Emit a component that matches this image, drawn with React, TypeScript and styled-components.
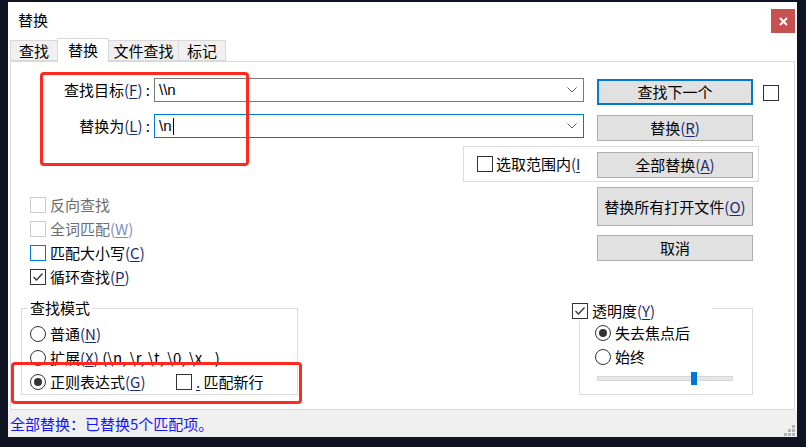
import React from "react";
import styled, { createGlobalStyle } from "styled-components";

const GlobalStyle = createGlobalStyle`
  html, body {
    margin: 0;
    padding: 0;
    background: #0f1322;
  }
  body {
    font-family: "Noto Sans CJK SC", "Noto Sans", sans-serif;
    font-size: 15px;
    line-height: 20px;
    color: #000;
  }
  * {
    box-sizing: border-box;
  }
`;

const Desktop = styled.div`
  width: 806px;
  height: 447px;
  padding: 2px 0 0 8px;
  background: #0f1322;
  overflow: hidden;
`;

const Dialog = styled.div`
  width: 789px;
  height: 435px;
  background: #fff;
  display: flex;
  flex-direction: column;
`;

const TitleBar = styled.div`
  height: 36px;
  flex: none;
  display: flex;
  align-items: center;
  justify-content: space-between;
  padding: 0 2px 0 10px;
`;

const CloseButton = styled.div`
  width: 24px;
  height: 24px;
  margin-top: 2px;
  background: #c75050;
  display: flex;
  align-items: center;
  justify-content: center;
`;

const TabStrip = styled.div`
  height: 23px;
  flex: none;
  display: flex;
  align-items: flex-end;
  padding-left: 2px;
`;

const Tab = styled.div<{ $active?: boolean; $w: number }>`
  position: relative;
  width: ${(p) => p.$w}px;
  height: ${(p) => (p.$active ? 24 : 21)}px;
  margin-right: -1px;
  margin-bottom: ${(p) => (p.$active ? -1 : 0)}px;
  z-index: ${(p) => (p.$active ? 2 : 1)};
  border: 1px solid #d9d9d9;
  border-bottom: ${(p) => (p.$active ? "none" : "1px solid #d9d9d9")};
  background: ${(p) => (p.$active ? "#fff" : "#f0f0f0")};
  display: flex;
  justify-content: center;
  align-items: ${(p) => (p.$active ? "flex-start" : "center")};
  padding-top: ${(p) => (p.$active ? 1 : 0)}px;
  line-height: 20px;
`;

const Panel = styled.div`
  position: relative;
  flex: none;
  width: 785px;
  height: 349px;
  margin-left: 2px;
  border: 1px solid #d9d9d9;
  padding-top: 16px;
  display: flex;
  flex-direction: column;
`;

const FieldRow = styled.div<{ $gap: number }>`
  display: flex;
  align-items: flex-start;
  height: 27px;
  margin-top: ${(p) => p.$gap}px;
`;

const FieldLabel = styled.div`
  width: 139px;
  margin-right: 4px;
  line-height: 24px;
  text-align: right;
  white-space: nowrap;
`;

const Combo = styled.div<{ $focus?: boolean }>`
  width: 430px;
  height: 24px;
  border: 1px solid ${(p) => (p.$focus ? "#0078d7" : "#7a7a7a")};
  display: flex;
  align-items: center;
  justify-content: space-between;
  padding: 0 6px 0 4px;
  font-family: "Liberation Sans", sans-serif;
  font-size: 15px;
`;

const ComboText = styled.span`
  display: flex;
  align-items: center;
`;

const Caret = styled.span`
  display: inline-block;
  width: 1px;
  height: 17px;
  margin-left: 1px;
  background: #000;
`;

const Button = styled.div<{ $h?: number; $default?: boolean; $gap?: number }>`
  width: 156px;
  height: ${(p) => p.$h ?? 26}px;
  margin-left: ${(p) => p.$gap ?? 0}px;
  margin-top: 1px;
  flex: none;
  background: #e1e1e1;
  border: ${(p) => (p.$default ? "2px solid #0078d7" : "1px solid #adadad")};
  display: flex;
  align-items: center;
  justify-content: center;
  white-space: nowrap;
`;

const Box = styled.span<{ $tone?: "normal" | "disabled" | "focus" }>`
  flex: none;
  width: 16px;
  height: 16px;
  background: #fff;
  border: 1px solid
    ${(p) =>
      p.$tone === "disabled" ? "#cccccc" : p.$tone === "focus" ? "#0078d7" : "#333333"};
  display: inline-flex;
  align-items: center;
  justify-content: center;
`;

const HeaderBox = styled(Box)`
  margin: 7px 0 0 10px;
`;

const RangeGroup = styled.div`
  margin: 5px 0 0 452px;
  width: 296px;
  height: 36px;
  border: 1px solid #dcdcdc;
  display: flex;
  align-items: center;
  padding-left: 13px;
`;

const ClippedLabel = styled.span`
  width: 84px;
  margin-left: 3px;
  overflow: hidden;
  white-space: nowrap;
`;

const Middle = styled.div`
  display: flex;
  height: 107px;
`;

const OptionList = styled.div`
  padding: 11px 0 0 19px;
  display: flex;
  flex-direction: column;
`;

const OptionRow = styled.div<{ $h?: number; $disabled?: boolean }>`
  height: ${(p) => p.$h ?? 24}px;
  display: flex;
  align-items: center;
  gap: 4px;
  white-space: nowrap;
  color: ${(p) => (p.$disabled ? "#6d6d6d" : "#000")};
`;

const ButtonColumn = styled.div`
  margin: 0 41px 0 auto;
  padding-top: 4px;
  display: flex;
  flex-direction: column;
  gap: 8px;
`;

const Bottom = styled.div`
  display: flex;
  align-items: flex-start;
  margin-top: 19px;
`;

const GroupBox = styled.div<{ $w: number }>`
  width: ${(p) => p.$w}px;
  height: 87px;
  border: 1px solid #dcdcdc;
  display: flex;
  flex-direction: column;
`;

const SearchGroup = styled(GroupBox)`
  margin-left: 10px;
`;

const TransGroup = styled(GroupBox)`
  margin: 0 41px 0 auto;
`;

const Caption = styled.div`
  width: fit-content;
  margin: -11px 0 0 6px;
  padding: 0 2px;
  background: #fff;
  line-height: 20px;
`;

const CheckCaption = styled.div`
  width: 140px;
  height: 20px;
  margin: -8px 0 0 -8px;
  background: #fff;
  display: flex;
  align-items: center;
  gap: 4px;
`;

const RadioList = styled.div<{ $left: number; $top: number }>`
  padding-left: ${(p) => p.$left}px;
  margin-top: ${(p) => p.$top}px;
  display: flex;
  flex-direction: column;
`;

const Radio = styled.span<{ $on?: boolean }>`
  flex: none;
  width: 16px;
  height: 16px;
  border-radius: 50%;
  border: 1px solid #333;
  background: #fff;
  display: inline-flex;
  align-items: center;
  justify-content: center;

  &::after {
    content: "";
    display: ${(p) => (p.$on ? "block" : "none")};
    width: 8px;
    height: 8px;
    border-radius: 50%;
    background: #333;
  }
`;

const RadioItem = styled.span<{ $w?: number }>`
  display: inline-flex;
  align-items: center;
  gap: 4px;
  width: ${(p) => (p.$w ? `${p.$w}px` : "auto")};
`;

const Slider = styled.div`
  position: relative;
  width: 136px;
  height: 13px;
  margin: 3px 0 0 17px;
  padding-top: 4px;
`;

const Track = styled.div`
  height: 5px;
  background: #e7e7e7;
  border: 1px solid #d6d6d6;
`;

const Thumb = styled.div`
  position: absolute;
  left: 94px;
  top: 0;
  width: 6px;
  height: 13px;
  background: #0078d7;
`;

const Mark = styled.span<{ $color?: string }>`
  color: ${(p) => p.$color ?? "#1b2c6e"};

  u {
    text-underline-offset: 2px;
  }
`;

const Annotation = styled.div<{ $x: number; $y: number; $w: number; $h: number }>`
  position: absolute;
  left: ${(p) => p.$x}px;
  top: ${(p) => p.$y}px;
  width: ${(p) => p.$w}px;
  height: ${(p) => p.$h}px;
  border: 3px solid #ff2a1f;
  border-radius: 4px;
  pointer-events: none;
  z-index: 5;
`;

const StatusBar = styled.div`
  flex: 1;
  background: #f0f0f0;
  display: flex;
  align-items: center;
  padding-left: 2px;
  color: #1414ff;
`;

const Grip = styled.svg`
  margin: auto 2px 1px auto;
  align-self: flex-end;
`;

const Key = ({ k, color }: { k: string; color?: string }) => (
  <Mark $color={color}>
    (<u>{k}</u>)
  </Mark>
);

const Check = () => (
  <svg width="14" height="14" viewBox="0 0 14 14">
    <polyline points="2.5,7 5.5,10 11.5,3.5" fill="none" stroke="#333" strokeWidth="1.3" />
  </svg>
);

const Chevron = () => (
  <svg width="10" height="6" viewBox="0 0 10 6">
    <polyline points="0.5,0.5 5,5 9.5,0.5" fill="none" stroke="#606060" strokeWidth="1" />
  </svg>
);

const App = () => {
  return (
    <>
      <GlobalStyle />
      <Desktop>
        <Dialog>
          <TitleBar>
            <span>替换</span>
            <CloseButton>
              <svg width="9" height="9" viewBox="0 0 9 9">
                <path d="M1 1 L8 8 M8 1 L1 8" stroke="#fff" strokeWidth="2" />
              </svg>
            </CloseButton>
          </TitleBar>

          <TabStrip>
            <Tab $w={48}>查找</Tab>
            <Tab $w={52} $active>
              替换
            </Tab>
            <Tab $w={71}>文件查找</Tab>
            <Tab $w={48}>标记</Tab>
          </TabStrip>

          <Panel>
            <Annotation $x={29} $y={10} $w={209} $h={94} />
            <Annotation $x={0} $y={300} $w={291} $h={42} />

            <FieldRow $gap={0}>
              <FieldLabel>
                查找目标<Key k="F" /> :
              </FieldLabel>
              <Combo>
                <ComboText>\\n</ComboText>
                <Chevron />
              </Combo>
              <Button $default $gap={13}>
                查找下一个
              </Button>
              <HeaderBox />
            </FieldRow>

            <FieldRow $gap={9}>
              <FieldLabel>
                替换为<Key k="L" /> :
              </FieldLabel>
              <Combo $focus>
                <ComboText>
                  \n
                  <Caret />
                </ComboText>
                <Chevron />
              </Combo>
              <Button $gap={13}>
                替换<Key k="R" />
              </Button>
            </FieldRow>

            <RangeGroup>
              <Box />
              <ClippedLabel>
                选取范围内<Key k="I" />
              </ClippedLabel>
              <Button $gap={17}>
                全部替换<Key k="A" />
              </Button>
            </RangeGroup>

            <Middle>
              <OptionList>
                <OptionRow $disabled>
                  <Box $tone="disabled" />
                  反向查找
                </OptionRow>
                <OptionRow $disabled>
                  <Box $tone="disabled" />
                  <span>
                    全词匹配<Key k="W" color="#7d8fc4" />
                  </span>
                </OptionRow>
                <OptionRow>
                  <Box $tone="focus" />
                  <span>
                    匹配大小写<Key k="C" />
                  </span>
                </OptionRow>
                <OptionRow>
                  <Box>
                    <Check />
                  </Box>
                  <span>
                    循环查找<Key k="P" />
                  </span>
                </OptionRow>
              </OptionList>

              <ButtonColumn>
                <Button $h={39}>
                  替换所有打开文件<Key k="O" />
                </Button>
                <Button>取消</Button>
              </ButtonColumn>
            </Middle>

            <Bottom>
              <SearchGroup $w={277}>
                <Caption>查找模式</Caption>
                <RadioList $left={8} $top={4}>
                  <OptionRow>
                    <RadioItem>
                      <Radio />
                      <span>
                        普通<Key k="N" />
                      </span>
                    </RadioItem>
                  </OptionRow>
                  <OptionRow>
                    <RadioItem>
                      <Radio />
                      <span>
                        扩展<Key k="X" /> (\n, \r, \t, \0, \x...)
                      </span>
                    </RadioItem>
                  </OptionRow>
                  <OptionRow $h={23}>
                    <RadioItem $w={142}>
                      <Radio $on />
                      <span>
                        正则表达式<Key k="G" />
                      </span>
                    </RadioItem>
                    <Box />
                    <span>
                      <Mark>
                        <u>.</u>
                      </Mark>{" "}
                      匹配新行
                    </span>
                  </OptionRow>
                </RadioList>
              </SearchGroup>

              <TransGroup $w={174}>
                <CheckCaption>
                  <Box>
                    <Check />
                  </Box>
                  <span>
                    透明度<Key k="Y" />
                  </span>
                </CheckCaption>
                <RadioList $left={15} $top={0}>
                  <OptionRow>
                    <RadioItem>
                      <Radio $on />
                      失去焦点后
                    </RadioItem>
                  </OptionRow>
                  <OptionRow>
                    <RadioItem>
                      <Radio />
                      始终
                    </RadioItem>
                  </OptionRow>
                </RadioList>
                <Slider>
                  <Track />
                  <Thumb />
                </Slider>
              </TransGroup>
            </Bottom>
          </Panel>

          <StatusBar>
            全部替换：已替换5个匹配项。
            <Grip width="12" height="12" viewBox="0 0 12 12">
              <rect x="9" y="1" width="3" height="3" fill="#b4b4b4" />
              <rect x="5" y="5" width="3" height="3" fill="#b4b4b4" />
              <rect x="9" y="5" width="3" height="3" fill="#b4b4b4" />
              <rect x="1" y="9" width="3" height="3" fill="#b4b4b4" />
              <rect x="5" y="9" width="3" height="3" fill="#b4b4b4" />
              <rect x="9" y="9" width="3" height="3" fill="#b4b4b4" />
            </Grip>
          </StatusBar>
        </Dialog>
      </Desktop>
    </>
  );
};

export default App;
